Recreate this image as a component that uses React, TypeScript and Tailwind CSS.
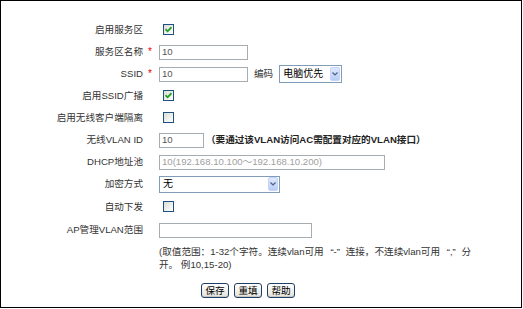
import React from "react";

const font = { fontFamily: '"Liberation Sans", "Noto Sans CJK SC", sans-serif' };

function Check({ checked }: { checked?: boolean }) {
  return (
    <span className="relative inline-block w-[11px] h-[11px] border border-[#1c5180] bg-gradient-to-br from-[#dcdcd7] to-white">
      {checked && (
        <svg className="absolute left-[1px] top-[1px]" width="7" height="7" viewBox="0 0 7 7">
          <path d="M0.5 3.2 L2.6 5.3 L6.5 1.2" stroke="#21a121" strokeWidth="1.8" fill="none" />
        </svg>
      )}
    </span>
  );
}

function Arrow() {
  return (
    <span className="flex items-center justify-center w-[10px] h-[14px] rounded-[2px] bg-gradient-to-b from-[#dfe9fb] to-[#b9cdf6] border border-[#c3d3fd]">
      <svg width="6" height="4" viewBox="0 0 6 4">
        <path d="M0.5 0.5 L3 3 L5.5 0.5" stroke="#4d6185" strokeWidth="1.2" fill="none" />
      </svg>
    </span>
  );
}

function Row({ label, star, children, h = "h-[22px]" }: { label: string; star?: boolean; children?: React.ReactNode; h?: string }) {
  return (
    <div className={`flex items-center ${h}`}>
      <div className="w-[142px] text-right text-[#333] text-[9.6px] leading-none whitespace-nowrap">{label}</div>
      <div className="w-[16px] pl-[5px] text-[#e00] text-[10px] leading-none">{star ? "*" : ""}</div>
      <div className="flex items-center">{children}</div>
    </div>
  );
}

function Input({ w, value, disabled }: { w: string; value?: string; disabled?: boolean }) {
  return (
    <div className={`${w} h-[15px] border border-[#a5acb2] bg-white flex items-center pl-[2px] text-[9.6px] leading-none ${disabled ? "text-[#a0a0a0]" : "text-[#555]"}`}>
      {value}
    </div>
  );
}

function Btn({ children }: { children: React.ReactNode }) {
  return (
    <div className="w-[28px] h-[15px] flex items-center justify-center rounded-[3px] border border-[#1f3e6b] bg-gradient-to-b from-white to-[#e3e3db] text-[9.6px] leading-none text-black shadow-[inset_0_-1px_0_#c8c8c0]">
      {children}
    </div>
  );
}

export default function App() {
  return (
    <div style={font} className="w-[522px] h-[308px] border border-black bg-white pt-[18px]">
      <Row label="启用服务区"><span className="ml-[4px]"><Check checked /></span></Row>
      <Row label="服务区名称" star><Input w="w-[89px]" value="10" /></Row>
      <Row label="SSID" star>
        <Input w="w-[89px]" value="10" />
        <span className="ml-[6px] text-[9.6px] text-[#333] leading-none">编码</span>
        <div className="ml-[6px] w-[63px] h-[18px] border border-[#7f9db9] bg-white flex items-center justify-between pl-[3px] pr-[1px]">
          <span className="text-[10px] leading-none text-black">电脑优先</span>
          <Arrow />
        </div>
      </Row>
      <Row label="启用SSID广播"><span className="ml-[4px]"><Check checked /></span></Row>
      <Row label="启用无线客户端隔离"><span className="ml-[4px]"><Check /></span></Row>
      <Row label="无线VLAN ID">
        <Input w="w-[45px]" value="10" />
        <span className="ml-[2px] text-[9.6px] font-bold text-[#222] leading-none whitespace-nowrap">（要通过该VLAN访问AC需配置对应的VLAN接口）</span>
      </Row>
      <Row label="DHCP地址池"><Input w="w-[226px]" value="10(192.168.10.100～192.168.10.200)" disabled /></Row>
      <Row label="加密方式">
        <div className="w-[121px] h-[17px] border border-[#7f9db9] bg-white flex items-center justify-between pl-[3px] pr-[1px]">
          <span className="text-[10px] leading-none text-black">无</span>
          <Arrow />
        </div>
      </Row>
      <Row label="自动下发" h="h-[24px]"><span className="ml-[4px]"><Check /></span></Row>
      <Row label="AP管理VLAN范围"><Input w="w-[153px]" /></Row>
      <div className="ml-[158px] mt-[4px] text-[9.6px] leading-[13px] text-[#333] whitespace-nowrap">
        (取值范围：1-32个字符。连续vlan可用 <span className="ml-[4px]">“</span>-<span className="mr-[3px]">”</span> 连接，不连续vlan可用 <span className="ml-[4px]">“</span>,<span className="mr-[3px]">”</span> 分
        <br />
        开。 例10,15-20)
      </div>
      <div className="flex ml-[200px] mt-[12px] gap-[5px]">
        <Btn>保存</Btn>
        <Btn>重填</Btn>
        <Btn>帮助</Btn>
      </div>
    </div>
  );
}
